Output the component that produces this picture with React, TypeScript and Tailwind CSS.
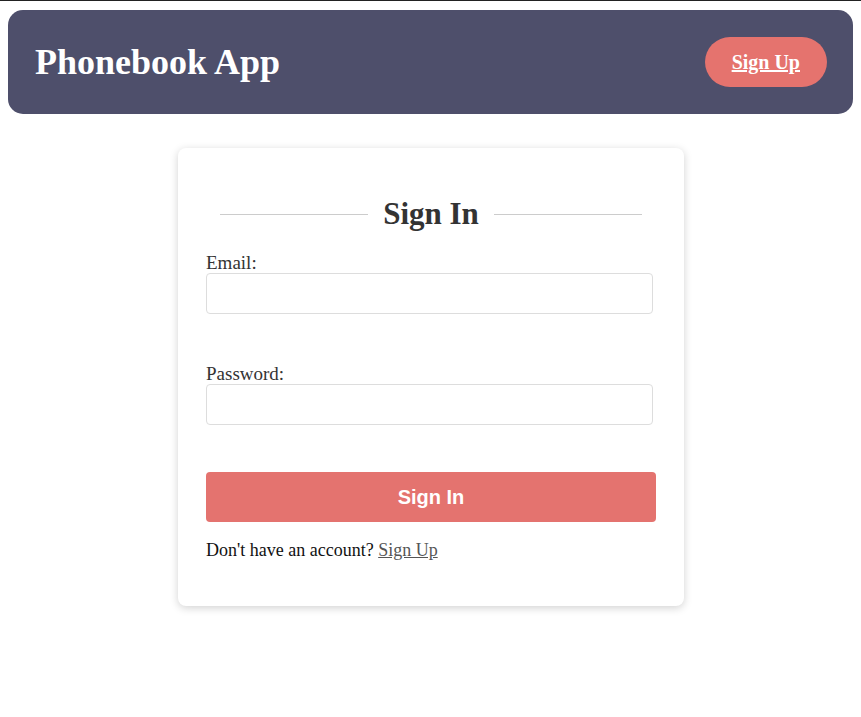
export default function App() {
  return (
    <div className="min-h-[717px] bg-white font-['Liberation_Serif',serif] text-[#333]">
      <div className="h-px bg-[#222]" />
      <div className="px-2 pt-[9px]">
        <header className="flex h-[104px] items-center justify-between rounded-[15px] bg-[#4e4f6b] pl-[27px] pr-[26px]">
          <h1 className="text-[36px] font-bold text-white">Phonebook App</h1>
          <a
            href="#"
            className="flex h-[50px] items-center rounded-full bg-[#e5736e] px-[27px] text-[20px] font-bold text-white underline"
          >
            Sign Up
          </a>
        </header>
      </div>

      <div className="mt-[34px] flex justify-center pl-[1px]">
        <div className="w-[506px] rounded-lg bg-white px-[28px] pt-[46px] pb-[42px] shadow-[0_2px_8px_rgba(0,0,0,0.18)]">
          <div className="mx-[14px] flex items-center gap-[15px]">
            <div className="h-px flex-1 bg-[#ccc]" />
            <h2 className="text-[31px] font-bold leading-[40px] text-[#333]">Sign In</h2>
            <div className="h-px flex-1 bg-[#ccc]" />
          </div>

          <form className="mt-[19px]" onSubmit={(e) => e.preventDefault()}>
            <label className="block text-[19px] leading-[19px]">Email:</label>
            <input
              type="email"
              className="mt-[1px] block h-[41px] w-[447px] rounded border border-[#ddd] bg-white px-2"
            />

            <label className="mt-[50px] block text-[19px] leading-[19px]">Password:</label>
            <input
              type="password"
              className="mt-[1px] block h-[41px] w-[447px] rounded border border-[#ddd] bg-white px-2"
            />

            <button
              type="submit"
              className="mt-[47px] flex h-[50px] w-full items-center justify-center rounded bg-[#e4736f] font-['Liberation_Sans',sans-serif] text-[20px] font-bold text-white"
            >
              Sign In
            </button>
          </form>

          <p className="mt-[15px] text-[18px] text-[#111]">
            Don't have an account?{" "}
            <a href="#" className="text-[#555] underline">
              Sign Up
            </a>
          </p>
        </div>
      </div>
    </div>
  );
}
